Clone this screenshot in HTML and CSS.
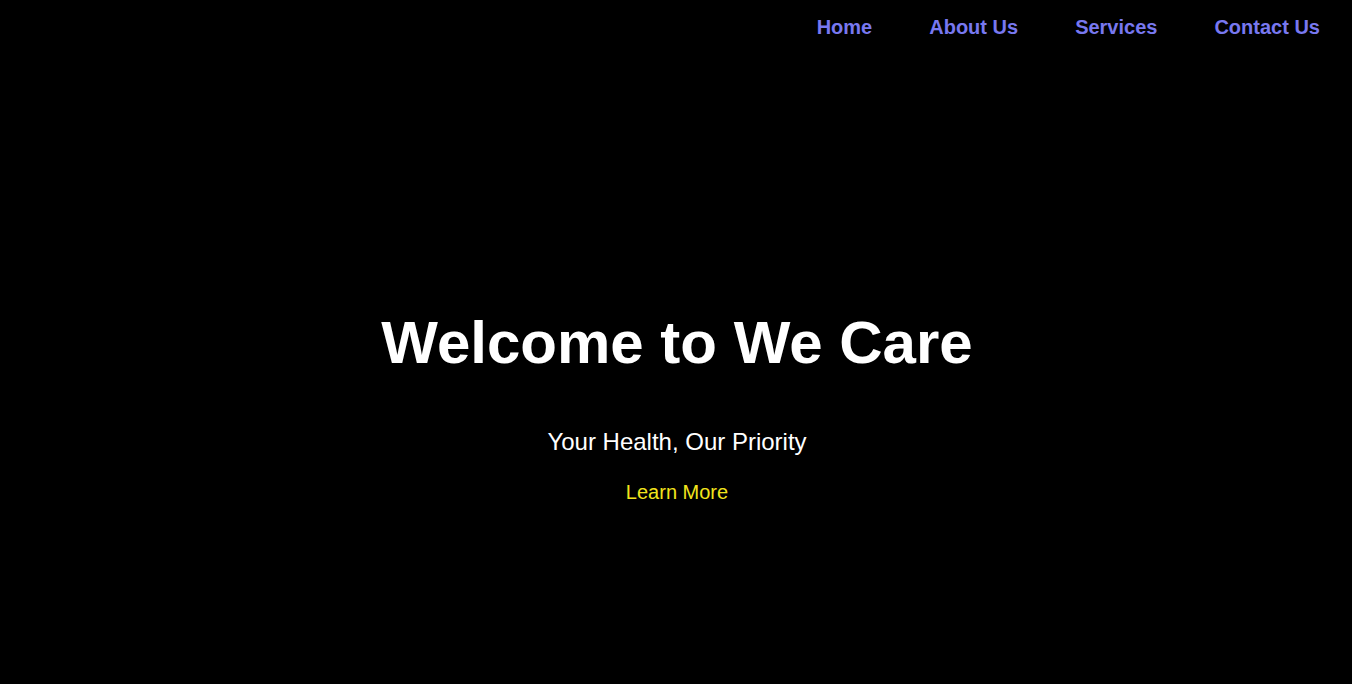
FILE: index.html
```html
<!DOCTYPE html>
<html lang="en">
<head>
<meta charset="utf-8">
<title>We Care</title>
<link rel="stylesheet" href="styles.css">
</head>
<body>
<header class="site-header">
  <nav class="nav">
    <a class="nav-link" href="#">Home</a>
    <a class="nav-link" href="#">About Us</a>
    <a class="nav-link" href="#">Services</a>
    <a class="nav-link" href="#">Contact Us</a>
  </nav>
</header>
<main class="hero">
  <h1 class="hero-title">Welcome to We Care</h1>
  <p class="hero-sub">Your Health, Our Priority</p>
  <a class="hero-link" href="#">Learn More</a>
</main>
</body>
</html>
```

FILE: styles.css
```css
html, body {
  margin: 0;
  padding: 0;
  background: #000;
  color: #fff;
  font-family: "Liberation Sans", Arial, sans-serif;
}

body {
  height: 100vh;
  display: flex;
  flex-direction: column;
  overflow: hidden;
}

.site-header {
  height: 64px;
  flex: none;
  box-sizing: border-box;
  padding: 16px 32px 0 32px;
  display: flex;
  justify-content: flex-end;
}

.nav {
  display: flex;
  gap: 57px;
}

.nav-link {
  color: #7878f0;
  font-weight: bold;
  font-size: 20px;
  line-height: 23px;
  text-decoration: none;
}

.hero {
  flex: 1;
  box-sizing: border-box;
  padding: 64px 0 0 2px;
  display: flex;
  flex-direction: column;
  align-items: center;
  justify-content: center;
  text-align: center;
}

.hero-title {
  margin: 0 0 51px 0;
  font-size: 60px;
  font-weight: bold;
}

.hero-sub {
  margin: 0 0 25px 0;
  font-size: 24px;
}

.hero-link {
  color: #f2e41c;
  font-size: 20px;
  text-decoration: none;
}
```
